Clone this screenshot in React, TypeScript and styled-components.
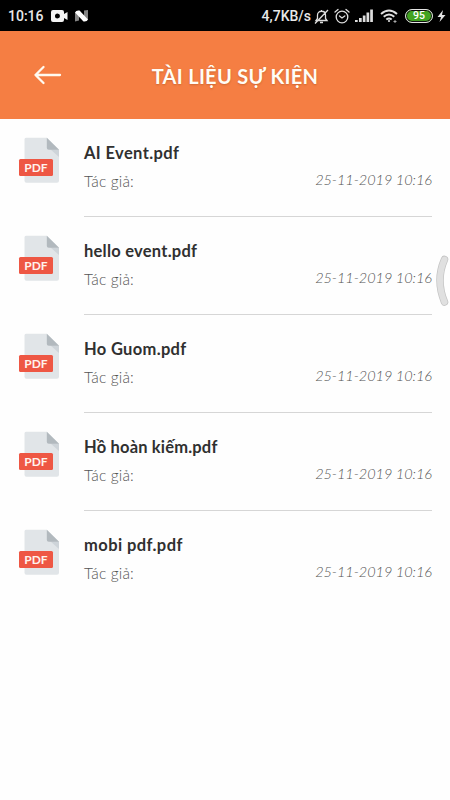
import React from "react";
import styled, { createGlobalStyle } from "styled-components";

const GlobalStyle = createGlobalStyle`
  * { box-sizing: border-box; }
  body { margin: 0; background: #fefefe; }
`;

const Screen = styled.div`
  position: relative;
  width: 450px;
  height: 800px;
  overflow: hidden;
  background: #fefefe;
  font-family: Lato, "Open Sans", sans-serif;
`;

const StatusBar = styled.div`
  display: flex;
  justify-content: space-between;
  height: 31px;
  padding: 0 4px 0 8px;
  background: #000;
  color: #e8e8e8;
  font: 500 14px/32px Roboto, sans-serif;
`;

const StatusGroup = styled.div`
  display: flex;
  align-items: center;
  height: 32px;
`;

const StatusText = styled.span`
  white-space: nowrap;
`;

const Glyph = styled.svg<{ $gap: number }>`
  display: block;
  flex: none;
  margin-left: ${(p) => p.$gap}px;
`;

const Battery = styled.div`
  display: flex;
  align-items: center;
  justify-content: center;
  width: 28px;
  height: 14px;
  margin-left: 6px;
  border: 1px solid #e4e4e4;
  border-radius: 7px;
  background: #42a321;
  box-shadow: inset 0 0 0 1px #111;
  color: #fff;
  font: 500 10.5px/12px Roboto, sans-serif;
`;

const Header = styled.header`
  display: grid;
  grid-template-columns: 96px 1fr 76px;
  align-items: center;
  height: 88px;
  padding-top: 2px;
  background: #f57e43;
`;

const BackButton = styled.button`
  display: block;
  margin: -2px 0 0 33px;
  padding: 0;
  width: 30px;
  height: 22px;
  border: 0;
  background: none;
`;

const Title = styled.h1`
  margin: 0;
  color: #fffdf6;
  font-size: 20px;
  font-weight: 700;
  line-height: 28px;
  letter-spacing: 0.3px;
  text-align: center;
  text-shadow: 0 1px 2px rgba(120, 50, 10, 0.3);
  white-space: nowrap;
`;

const List = styled.ul`
  margin: 0;
  padding: 0;
  list-style: none;
`;

const Row = styled.li`
  display: flex;
  height: 98.1px;
  padding: 0 18px;
`;

const FileIcon = styled.svg`
  display: block;
  flex: none;
  width: 42px;
  height: 48px;
  margin: 18px 24px 0 0;
`;

const Details = styled.div`
  flex: 1;
  padding-top: 22px;
  border-bottom: 1px solid #d6d6d6;

  ${Row}:last-child & {
    border-bottom: 0;
  }
`;

const FileName = styled.div<{ $spacing: number }>`
  color: #303030;
  font-size: 16.5px;
  font-weight: 700;
  line-height: 24px;
  letter-spacing: ${(p) => p.$spacing}px;
  white-space: nowrap;
`;

const Meta = styled.div`
  display: flex;
  justify-content: space-between;
  margin-top: 4px;
  color: #545454;
  font-size: 15.5px;
  font-weight: 300;
  line-height: 24px;
`;

const Author = styled.span`
  letter-spacing: 0.15px;
`;

const Timestamp = styled.time`
  margin-top: -1px;
  font-size: 14.5px;
  font-style: italic;
  letter-spacing: -0.05px;
`;

const EdgeHandle = styled.svg`
  position: absolute;
  left: 434px;
  top: 254px;
`;

const files = [
  { name: "AI Event.pdf", spacing: 0.38 },
  { name: "hello event.pdf", spacing: 0.24 },
  { name: "Ho Guom.pdf", spacing: 0.32 },
  { name: "Hồ hoàn kiếm.pdf", spacing: 0.18 },
  { name: "mobi pdf.pdf", spacing: 0.42 },
];

const PdfIcon = () => (
  <FileIcon viewBox="0 0 42 48">
    <path d="M8 .7h20.8L41 12.8v31a2 2 0 0 1-2 2H8.500a2 2 0 0 1-2-2V2.500A1.800 1.800 0 0 1 8 .7z" fill="#e1e5e8" />
    <path d="m32 12 9 8v-7.500z" fill="#ced4d9" />
    <path d="M28.800.7 41 12.800H30.800a2 2 0 0 1-2-2z" fill="#b2b9be" />
    <rect x="1" y="22" width="34" height="17" rx="1.500" fill="#ee5744" />
    <text x="18" y="34.800" textAnchor="middle" fill="#fff3ee" fontFamily="Lato, sans-serif" fontSize="12" fontWeight="700">PDF</text>
  </FileIcon>
);

export default function App() {
  return (
    <Screen>
      <GlobalStyle />
      <StatusBar>
        <StatusGroup>
          <StatusText>10:16</StatusText>
          <Glyph $gap={7} width="17" height="14" viewBox="0 0 17 14">
            <path fill="#f4f4f4" fillRule="evenodd" d="M2 1h9q2 0 2 2v2l3.500-2v8L13 9v2q0 2-2 2H2q-2 0-2-2V3q0-2 2-2zm4.500 3.500a2.500 2.500 0 1 0 0 5 2.500 2.500 0 0 0 0-5z" />
          </Glyph>
          <Glyph $gap={6} width="15" height="14" viewBox="0 0 15 14">
            <path d="M1 3v9.500l4-1V6zM10 1.500l4-.5v10l-4-3z" fill="#858585" />
            <path d="M1 3.500Q2 1 5.500 1.500L14 10.500Q13 13 9.500 12.500z" fill="#fff" />
          </Glyph>
        </StatusGroup>
        <StatusGroup>
          <StatusText>4,7KB/s</StatusText>
          <Glyph $gap={3} width="15" height="17" viewBox="0 0 15 17" fill="none" stroke="#ddd" strokeWidth="1.300">
            <path d="M2 12.500h11l-1.500-2V7c0-5-8-5-8 0v3.500zM6 14.500h3M7.500 2v1.500M1 15.500 14 2" />
          </Glyph>
          <Glyph $gap={5} width="16" height="17" viewBox="0 0 16 17" fill="none" stroke="#ddd" strokeWidth="1.300" strokeLinecap="round">
            <circle cx="8" cy="9" r="5.800" />
            <path d="M1 4l3-2.500M15 4l-3-2.500M5.500 8 8 10l2.800-2" />
          </Glyph>
          <Glyph $gap={5} width="18" height="14" viewBox="0 0 18 14" fill="#ddd">
            <path d="M0 11h2.700v2H0zM4 9h2.700v4H4zM7.800 6.500h2.700V13H7.800zM11.500 3.500h2.700V13h-2.700zM15.200 .5h2.700V13h-2.700z" />
          </Glyph>
          <Glyph $gap={7} width="19" height="16" viewBox="0 0 19 16" fill="none" stroke="#e0e0e0" strokeWidth="1.900">
            <path d="M1 6q8-7 16 0M3.700 8.800q5.300-4.500 10.600 0M6.300 11.500q2.700-2.200 5.400 0" />
            <circle cx="9" cy="13" r="1.100" fill="#ddd" stroke="none" />
            <path d="M13.500 13.500h3M15 12v3" strokeWidth="1" stroke="#aaa" />
          </Glyph>
          <Battery>95</Battery>
          <Glyph $gap={4} width="9" height="14" viewBox="0 0 9 14">
            <path d="M6 1 .5 8H4l-1.500 5L8.500 6H5z" fill="#e4e4e4" />
          </Glyph>
        </StatusGroup>
      </StatusBar>
      <Header>
        <BackButton aria-label="Quay lại">
          <svg width="30" height="22" viewBox="0 0 30 22" fill="none" stroke="#fffaf0" strokeWidth="2.300" strokeLinecap="round" strokeLinejoin="round">
            <path d="M27 11H2.500M10.500 3l-8 8 8 8" />
          </svg>
        </BackButton>
        <Title>TÀI LIỆU SỰ KIỆN</Title>
      </Header>
      <List>
        {files.map((file) => (
          <Row key={file.name}>
            <PdfIcon />
            <Details>
              <FileName $spacing={file.spacing}>{file.name}</FileName>
              <Meta>
                <Author>Tác giả:</Author>
                <Timestamp>25-11-2019 10:16</Timestamp>
              </Meta>
            </Details>
          </Row>
        ))}
      </List>
      <EdgeHandle width="16" height="54" viewBox="0 0 16 54" fill="none" strokeLinecap="round">
        <path d="M10.500 5.500Q1.500 26 10.500 48" stroke="#c4c4c4" strokeWidth="7.500" />
        <path d="M10.500 5.500Q1.500 26 10.500 48" stroke="#e0e0e0" strokeWidth="6" />
      </EdgeHandle>
    </Screen>
  );
}
